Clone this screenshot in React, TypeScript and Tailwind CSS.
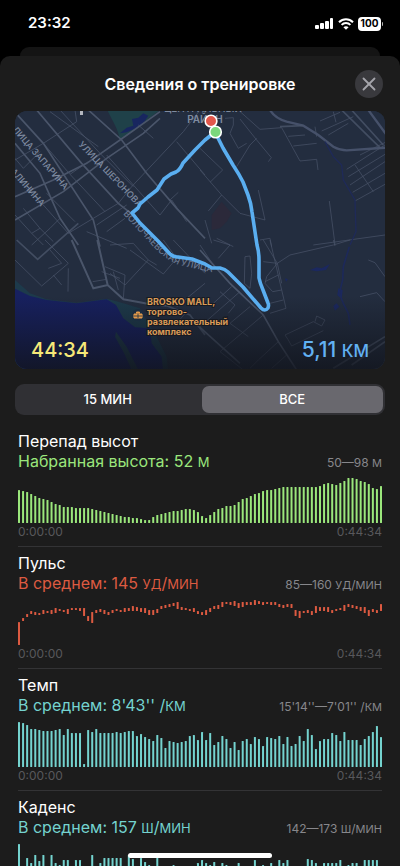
import { X } from "lucide-react";

type Bar = [top: number, bottom: number];

const CHART_HEIGHT = 46;

const fromHeights = (heights: number[]): Bar[] =>
  heights.map((h) => [CHART_HEIGHT - h, CHART_HEIGHT]);

const elevation = fromHeights([
  33, 32, 31, 29, 27, 25, 24, 23, 21, 19, 18, 16, 16, 16, 15, 15, 15, 15, 14, 13, 12, 11, 10, 9, 8, 7, 6, 6, 5, 5,
  4, 3, 3, 6, 8, 9, 10, 11, 12, 12, 13, 14, 14, 13, 11, 7, 5, 8, 11, 14, 15, 17, 17, 18, 21, 24, 25, 27, 29, 30,
  32, 33, 33, 34, 35, 36, 36, 36, 36, 36, 36, 36, 36, 36, 37, 39, 40, 39, 38, 40, 42, 45, 45, 44, 42, 41, 39, 35, 34, 37,
]);

const pulse: Bar[] = [
  [23, 46], [19, 22], [15, 18], [12, 15], [13, 16], [14, 16], [11, 15], [12, 14], [11, 15], [9, 14],
  [10, 12], [11, 13], [10, 15], [9, 11], [9, 11], [9, 12], [9, 17], [17, 22], [13, 24], [11, 14],
  [10, 13], [11, 15], [13, 16], [11, 14], [10, 12], [11, 13], [9, 13], [9, 12], [7, 12], [8, 12],
  [9, 13], [9, 14], [11, 16], [11, 16], [10, 14], [7, 10], [6, 9], [5, 8], [4, 7], [3, 10],
  [8, 11], [9, 11], [10, 12], [9, 13], [12, 15], [13, 16], [11, 16], [9, 13], [7, 10], [6, 10],
  [3, 8], [3, 5], [3, 6], [2, 7], [4, 9], [3, 8], [3, 6], [3, 6], [1, 6], [2, 5],
  [3, 6], [3, 5], [3, 6], [3, 6], [5, 8], [6, 9], [5, 8], [5, 9], [11, 17], [12, 19],
  [12, 14], [11, 14], [12, 16], [7, 14], [8, 12], [8, 12], [8, 13], [11, 14], [10, 12], [9, 11],
  [6, 12], [5, 8], [6, 9], [7, 10], [8, 12], [8, 14], [11, 17], [10, 13], [11, 14], [5, 12],
];

const pace = fromHeights([
  45, 44, 42, 38, 38, 37, 36, 36, 36, 37, 38, 32, 38, 34, 34, 34, 3, 37, 35, 38, 34, 34, 34, 34, 35, 34, 35, 36, 36, 31,
  33, 30, 28, 26, 32, 29, 19, 26, 25, 24, 25, 26, 31, 32, 27, 35, 27, 34, 22, 25, 31, 28, 19, 25, 17, 26, 28, 23, 30, 28,
  21, 30, 29, 28, 31, 23, 30, 21, 23, 31, 26, 38, 32, 18, 26, 28, 28, 34, 32, 26, 35, 27, 27, 27, 22, 28, 31, 35, 41, 30,
]);

const cadence = fromHeights([
  45, 20, 31, 26, 34, 28, 34, 21, 34, 26, 24, 29, 29, 20, 29, 29, 20, 20, 34, 20, 26, 31, 31, 31, 31, 31, 20, 34, 30, 22,
  31, 27, 24, 22, 31, 20, 20, 20, 24, 20, 20, 20, 20, 20, 26, 29, 26, 24, 27, 20, 26, 24, 20, 20, 26, 20, 20, 20, 29, 20,
  24, 20, 26, 20, 29, 26, 29, 20, 20, 20, 20, 30, 29, 26, 20, 26, 26, 26, 26, 29, 20, 24, 26, 26, 20, 29, 29, 29, 29, 20,
]);

const metrics = [
  { title: "Перепад высот", summary: "Набранная высота: 52", range: "50—98", unit: "М", color: "text-[#9be77c]", bars: elevation },
  { title: "Пульс", summary: "В среднем: 145", range: "85—160", unit: "УД/МИН", color: "text-[#dc5a41]", bars: pulse },
  { title: "Темп", summary: "В среднем: 8'43''", range: "15'14''—7'01''", unit: "/КМ", color: "text-[#74d3cf]", bars: pace },
  { title: "Каденс", summary: "В среднем: 157", range: "142—173", unit: "Ш/МИН", color: "text-[#74d3cf]", bars: cadence },
];

/* Units are set as small capitals, with the slash kept at full size. */
function Unit({ value, capClass }: { value: string; capClass: string }) {
  const parts = value.split("/");
  return (
    <>
      {parts.map((part, i) => (
        <span key={i}>
          {i > 0 && "/"}
          <span className={capClass}>{part}</span>
        </span>
      ))}
    </>
  );
}

function StatusBar() {
  return (
    <div className="flex h-[47px] shrink-0 items-center justify-between pr-[17px] pl-7">
      <span className="text-[15px] font-semibold">23:32</span>
      <div className="flex items-center gap-1">
        <svg className="h-3 w-[19px]" viewBox="0 0 19 12" fill="currentColor" aria-hidden="true">
          <rect x="0" y="7" width="4" height="4" rx="1" />
          <rect x="5" y="5" width="4" height="6" rx="1" />
          <rect x="10" y="3" width="4" height="8" rx="1" />
          <rect x="15" y="0" width="3" height="11" rx="1" />
        </svg>
        <svg className="h-3 w-4" viewBox="0 0 16 12" fill="none" stroke="currentColor" strokeWidth="2" aria-hidden="true">
          <path d="M1 4.2C5 .2 11 .2 15 4.2" />
          <path d="M3.6 6.9C6 4.5 10 4.5 12.4 6.9" />
          <path d="M8 11.8 5.4 9.2c1.5-1.4 3.7-1.4 5.2 0Z" fill="currentColor" stroke="none" />
        </svg>
        <div className="flex items-center gap-px">
          <span className="flex h-[14px] w-[23px] items-center justify-center rounded bg-white text-[10px] font-bold text-black">
            100
          </span>
          <span className="h-1 w-px rounded-r bg-white/70" />
        </div>
      </div>
    </div>
  );
}

function RouteMap() {
  return (
    <div className="relative h-[258px] overflow-hidden rounded-xl bg-[#232d3f]">
      <svg className="h-full w-full" viewBox="0 0 370 258" preserveAspectRatio="xMidYMid slice" role="img" aria-label="Маршрут тренировки">
        <defs>
          <linearGradient id="shade" x1="0" y1="0" x2="0" y2="1">
            <stop offset="0" stopColor="#11141c" stopOpacity="0" />
            <stop offset="1" stopColor="#11141c" stopOpacity="0.8" />
          </linearGradient>
          <path id="volochaevskaya" d="M108 103 L136 133 Q150 149 164 154 L205 163" />
        </defs>
        <rect width="370" height="258" fill="#232d3f" />

        {/* North-west: park and the street grid */}
        <g transform="translate(-5 -6) scale(0.3333)" fill="none" stroke="#4a556a" strokeWidth="4">
          <path d="M292 15H450L330 106C325 70 305 45 292 15Z" fill="#1f4149" stroke="none" />
          <path d="M330 85 350 68 370 62 366 42 385 38 400 25 415 32 395 62 350 82Z" fill="#18265f" stroke="none" />
          <path strokeWidth="5" d="M0 5 100 115 250 345 270 425M80 15 215 175 325 295 375 335M235 15 335 105 410 205 500 310 585 400M15 115 90 205 150 340 205 420M15 275 130 225 230 175 330 105 450 20M15 345 160 260 290 160 400 85 450 40" />
          <path d="M150 15 270 145M195 15 200 50 100 115 15 165M100 115 180 208 285 320M180 208 235 170M365 245 520 80 570 15M175 385 250 340 325 295 365 245M270 145 370 245M290 150 450 330M385 60 430 100M120 20 265 125M15 215 100 300 175 385M40 310 90 370 130 410M110 265 195 350M15 330 65 385 90 370M65 385 100 420M65 420 120 370 150 340M480 285 505 262M450 330 485 285 530 350M500 110 585 210M15 160 40 190 90 140M260 360 350 300M290 380 345 340M230 380 350 430" strokeWidth="3" opacity="0.75" />
          <rect x="210" y="14" width="9" height="16" fill="#b4b8c0" stroke="none" />
        </g>

        {/* North-east: arterial road, allotments, creek */}
        <g transform="translate(185 -6) scale(0.3333)" fill="none" stroke="#4a556a" strokeWidth="3">
          <path d="M35 375 35 330 65 290 95 325 80 350 60 370Z" fill="#2b293a" stroke="none" />
          <path strokeWidth="7" d="M210 15Q225 40 260 50L310 62 355 90 400 125Q420 136 440 136L560 128M505 15 560 90" stroke="#46516a" />
          <path strokeWidth="5" d="M425 15 540 128M455 15 550 120M240 65 310 62" opacity="0.8" />
          <path d="M115 15 180 73 245 68 300 168 350 163 354 195M120 42 170 105 214 158 205 170M110 185 150 120 170 100M75 40 100 38 100 60 90 85 115 130 140 115M0 130 68 195 30 232M0 195 65 270 120 325 195 345 175 255M65 270 25 318M265 94 315 90M280 123 350 115M350 95 345 65M360 48 420 22M365 78 460 35M400 20 408 52M385 90 445 55M440 193 555 120M445 215 555 148M450 240 555 170M458 262 555 205M465 288 555 238M465 180 520 260M480 150 560 110M388 288 405 418M340 420 555 390M15 345 35 415M50 400 100 425M180 405 210 400 215 425M60 90 40 60" opacity="0.7" />
          <path d="M375 110 400 155 425 180 430 225 465 285 468 380 450 420" stroke="#1f2a58" strokeWidth="4" />
        </g>

        {/* South-west: river and embankment */}
        <g transform="translate(-5 129) scale(0.3333)" fill="none" stroke="#4a556a" strokeWidth="3">
          <path d="M15 120 60 160 110 178 200 188 290 176 325 185 390 205 415 250 440 290 470 350 475 400H15Z" fill="#1d3a4b" stroke="none" />
          <path d="M15 146 60 168 110 180 200 190 290 178 318 195 340 235 375 262 420 265 425 310 455 350 460 400H15Z" fill="#17205f" stroke="none" />
          <path d="M318 275 350 320 390 400H370L340 335 315 290Z" fill="#1d3a4b" stroke="none" />
          <path strokeWidth="6" d="M185 0 250 145 293 135 340 178 405 190 470 197M262 0 293 135" />
          <path strokeWidth="5" d="M20 0 83 58 205-50M470 197 540 225 585 285" opacity="0.8" />
          <path d="M15 60 95 138 175 70 105 0M130 105 155 135M175 85 174 155M248 125 290 118M285 80 345 105 340 178M310 95 325 150M275 95 330 115M345 135 415 60 370 10 300 15M360 30 460 102 500 55 460 0M415 60 440 75M490 0 585 100M345 135 300 100M120 30 155 70 115 85M500 200 585 130M530 215 500 250" opacity="0.7" />
        </g>

        {/* South-east: industrial blocks and ponds */}
        <g transform="translate(185 129) scale(0.3333)" fill="none" stroke="#4a556a" strokeWidth="3">
          <path d="M330 90 350 82 365 85 390 72 378 90 350 94ZM400 198 410 190 418 200 405 212ZM415 145 428 150 425 178 412 165ZM255 115 264 118 258 125Z" fill="#1b285f" stroke="none" />
          <path d="M448 20 430 80 428 120 418 160 430 190 445 220 450 255" stroke="#1d2959" strokeWidth="5" />
          <path strokeWidth="5" d="M0 30 90 130 190 225 235 305 290 390M0 262 120 370M400 385 555 290M455 375 555 305" />
          <path d="M135 50 150 48 155 100 150 145 133 130ZM190 65 232 70 270 45 400 15 450 0M190 0 232 70 200 110 195 130 218 155 245 150M210 0 258 205 210 220M232 70 245 130M210 190 250 180M195 125 235 105M235 305 175 360 150 385M190 225 60 335 130 390M265 300 255 285 340 245 365 258 375 240 350 228 345 245M265 300 275 318 370 272M480 170 530 158 555 185M505 60 525 68 555 110M60 155 105 195 85 220M95 140 40 190M120 155 0 260M150 200 90 250 145 290M40 0 90 15 55 55M0 15 40 75M400 0 405 18M260 345 215 385" opacity="0.7" />
        </g>

        <rect y="185" width="370" height="73" fill="url(#shade)" />

        <g fill="#7f8ba1" fontSize="9" fontWeight="500">
          <text transform="translate(-3 19) rotate(49)">ЛИЦА ЗАПАРИНА</text>
          <text transform="translate(63 34) rotate(46)">УЛИЦА ШЕРОНОВА</text>
          <text transform="translate(-9 56) rotate(49)">КАЛИНИНА</text>
          <text fill="#6b7891"><textPath href="#volochaevskaya">ВОЛОЧАЕВСКАЯ УЛИЦА</textPath></text>
          <text x="188" y="1" fontSize="10" textAnchor="middle">ЦЕНТРАЛЬНЫЙ</text>
          <text x="190" y="12" fontSize="10" fontWeight="600" textAnchor="middle">РАЙОН</text>
        </g>

        <path
          d="M200 21 190 29 180 39 168 52Q165 59 161 61L156 63 149 68 142 79 133 86 125 93 123 97 117 102 125 112 143 130 155 143Q158 146 163 146L177 148 190 153 197 157 205 157Q210 158 213 161L228 176 246 197Q250 201 253 197Q254 194 253 192L248 179Q245 172 244 167L244 149Q244 141 242 134L237 101Q236 92 233 84L228 71Q224 63 218 54L208 37Z"
          fill="none"
          stroke="#5aaef0"
          strokeWidth="3.6"
          strokeLinejoin="round"
        />
        <circle cx="196" cy="10" r="5.8" fill="#e2574c" stroke="#fff" strokeWidth="1.6" />
        <circle cx="200.5" cy="21" r="5.8" fill="#7bd87c" stroke="#fff" strokeWidth="1.6" />

        <circle cx="123" cy="204" r="6" fill="#1b2d40" />
        <path d="M119 203h8v4h-8zM121.5 202.5v-1.5h3v1.5" fill="#e39a4b" stroke="#e39a4b" />
        <path d="M119 205h8M123 203v4" stroke="#1b2d40" strokeWidth="0.8" />
        <g fill="#d99b57" stroke="#171a22" strokeWidth="2" paintOrder="stroke" fontSize="9" fontWeight="700">
          <text x="132" y="194">BROSKO MALL,</text>
          <text x="132" y="204">торгово-</text>
          <text x="132" y="214">развлекательный</text>
          <text x="132" y="224">комплекс</text>
        </g>
      </svg>
      <div className="absolute inset-x-4 bottom-1 flex items-center justify-between text-xl leading-[30px] font-medium">
        <span className="text-[#f6e878]">44:34</span>
        <span className="text-[21px] text-[#62b1f3]">
          5,11 <span className="text-[17px] leading-none">КМ</span>
        </span>
      </div>
    </div>
  );
}

function BarChart({ bars, label }: { bars: Bar[]; label: string }) {
  const step = 362 / (bars.length - 1);
  return (
    <svg className="h-[46px] w-full" viewBox="0 0 364 46" preserveAspectRatio="none" fill="currentColor" role="img" aria-label={label}>
      {bars.map(([top, bottom], i) => (
        <rect key={i} x={i * step} y={top} width="2" height={bottom - top} rx="0.5" />
      ))}
    </svg>
  );
}

export default function App() {
  return (
    <div className="flex h-screen flex-col overflow-hidden bg-black font-['Inter','Liberation_Sans',sans-serif] text-white">
      <StatusBar />
      <div className="mx-5 h-[9px] shrink-0 rounded-t-[10px] bg-[#141414]" />
      <main className="min-h-0 grow overflow-hidden rounded-t-[10px] bg-[#1c1c1c]">
        <header className="grid h-[55px] grid-cols-[28px_1fr_28px] items-center px-[17px]">
          <h1 className="col-start-2 text-center text-base font-semibold">Сведения о тренировке</h1>
          <button type="button" aria-label="Закрыть" className="flex size-7 items-center justify-center rounded-full bg-[#39393d] text-[#a5a5ab]">
            <X size={22} strokeWidth={2} />
          </button>
        </header>
        <div className="px-[15px]">
          <RouteMap />
          <div className="mt-[15px] flex h-[31px] gap-[3px] rounded-[9px] bg-[#303034] p-[2px] text-[13px] font-medium">
            <button type="button" aria-pressed="false" className="flex-1 rounded-[7px]">15 МИН</button>
            <button type="button" aria-pressed="true" className="flex-1 rounded-[7px] bg-[#69686e]">ВСЕ</button>
          </div>
        </div>
        <div className="px-[18px] pt-[10px]">
          {metrics.map((m) => (
            <section key={m.title} className="border-b border-[#333335] pt-[6px] pb-[5px]">
              <h2 className="text-base leading-5">{m.title}</h2>
              <div className="flex h-5 items-end justify-between">
                <p className={`text-base leading-5 ${m.color}`}>
                  {m.summary} <Unit value={m.unit} capClass="text-[13px] leading-none" />
                </p>
                <p className="text-xs leading-4 text-[#87878b]">
                  {m.range} <Unit value={m.unit} capClass="text-[11px] leading-none" />
                </p>
              </div>
              <div className={`flex pt-[6px] ${m.color}`}>
                <BarChart bars={m.bars} label={m.title} />
              </div>
              <div className="flex justify-between text-xs leading-[18px] text-[#58585b]">
                <span>0:00:00</span>
                <span>0:44:34</span>
              </div>
            </section>
          ))}
        </div>
      </main>
      <div className="fixed bottom-2 left-1/2 h-[5px] w-36 -translate-x-1/2 rounded-full bg-white" />
    </div>
  );
}
